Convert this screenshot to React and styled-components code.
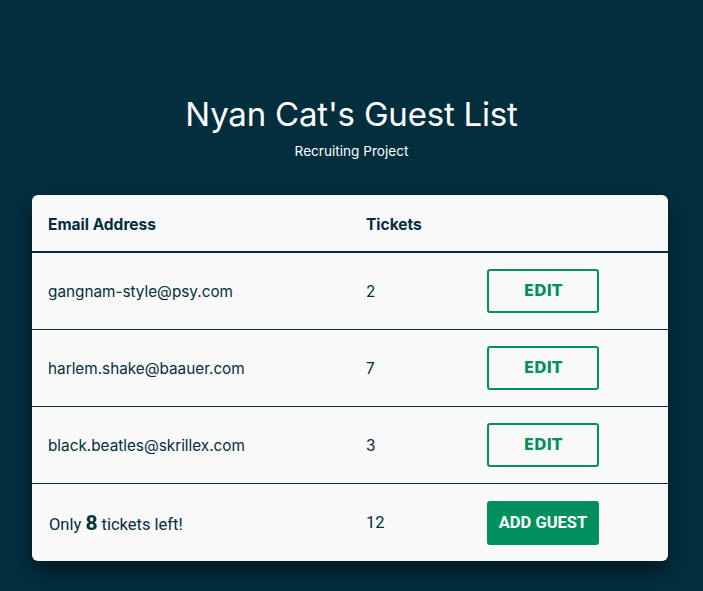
import React from 'react';
import styled, { createGlobalStyle } from 'styled-components';

const GlobalStyle = createGlobalStyle`
  html, body {
    margin: 0;
    padding: 0;
    background: #022e3e;
  }
  body {
    font-family: Inter, "Noto Sans", sans-serif;
    color: #022e3e;
  }
`;

const Page = styled.main`
  min-height: 591px;
  padding-top: 94px;
  box-sizing: border-box;
`;

const Header = styled.header`
  text-align: center;
  color: #ffffff;
  margin-bottom: 36px;
`;

const Title = styled.h1`
  margin: 0;
  font-size: 33px;
  font-weight: 400;
  line-height: 40px;
  letter-spacing: -0.2px;
`;

const Subtitle = styled.p`
  margin: 9px 0 0;
  font-size: 13.6px;
  line-height: 16px;
`;

const Card = styled.section`
  margin: 0 35px 0 32px;
  background: #f9f9f9;
  border-radius: 6px;
  box-shadow: 0 10px 18px rgba(0, 0, 0, 0.45);
  overflow: hidden;
`;

const Row = styled.div`
  display: grid;
  grid-template-columns: 318px 121px 112px;
  align-items: center;
  padding: 0 16px;
  height: ${(p) => (p.$head ? '56px' : '76px')};
  border-bottom: ${(p) => (p.$head ? '2px' : '1px')} solid #022e3e;
  font-family: ${(p) => (p.$footer ? 'Roboto, sans-serif' : 'inherit')};

  &:last-child {
    border-bottom: none;
    height: 77px;
  }
`;

const HeadCell = styled.div`
  font-weight: 700;
  font-size: 15.5px;
  padding-top: 2px;
`;

const Cell = styled.div`
  font-size: ${(p) => (p.$large ? '16.5px' : '15.3px')};
  padding-left: ${(p) => (p.$inset ? '1px' : '0')};
`;

const Big = styled.b`
  font-size: 21px;
  font-weight: 700;
`;

const Button = styled.button`
  width: 112px;
  height: 44px;
  border-radius: 3px;
  font-size: ${(p) => (p.$solid ? '16.5px' : '15px')};
  font-weight: 700;
  cursor: pointer;
  border: 2px solid #00905e;
  background: ${(p) => (p.$solid ? '#00905e' : 'transparent')};
  color: ${(p) => (p.$solid ? '#ffffff' : '#00905e')};
  font-family: ${(p) => (p.$solid ? 'Roboto, sans-serif' : '"DejaVu Sans", sans-serif')};
`;

const guests = [
  { email: 'gangnam-style@psy.com', tickets: 2 },
  { email: 'harlem.shake@baauer.com', tickets: 7 },
  { email: 'black.beatles@skrillex.com', tickets: 3 },
];

export default function App() {
  return (
    <>
      <GlobalStyle />
      <Page>
        <Header>
          <Title>Nyan Cat's Guest List</Title>
          <Subtitle>Recruiting Project</Subtitle>
        </Header>
        <Card>
          <Row $head>
            <HeadCell>Email Address</HeadCell>
            <HeadCell>Tickets</HeadCell>
            <div />
          </Row>
          {guests.map((g) => (
            <Row key={g.email}>
              <Cell>{g.email}</Cell>
              <Cell>{g.tickets}</Cell>
              <Button type="button">EDIT</Button>
            </Row>
          ))}
          <Row $footer>
            <Cell $inset $large>
              Only <Big>8</Big> tickets left!
            </Cell>
            <Cell $large>12</Cell>
            <Button type="button" $solid>ADD GUEST</Button>
          </Row>
        </Card>
      </Page>
    </>
  );
}
